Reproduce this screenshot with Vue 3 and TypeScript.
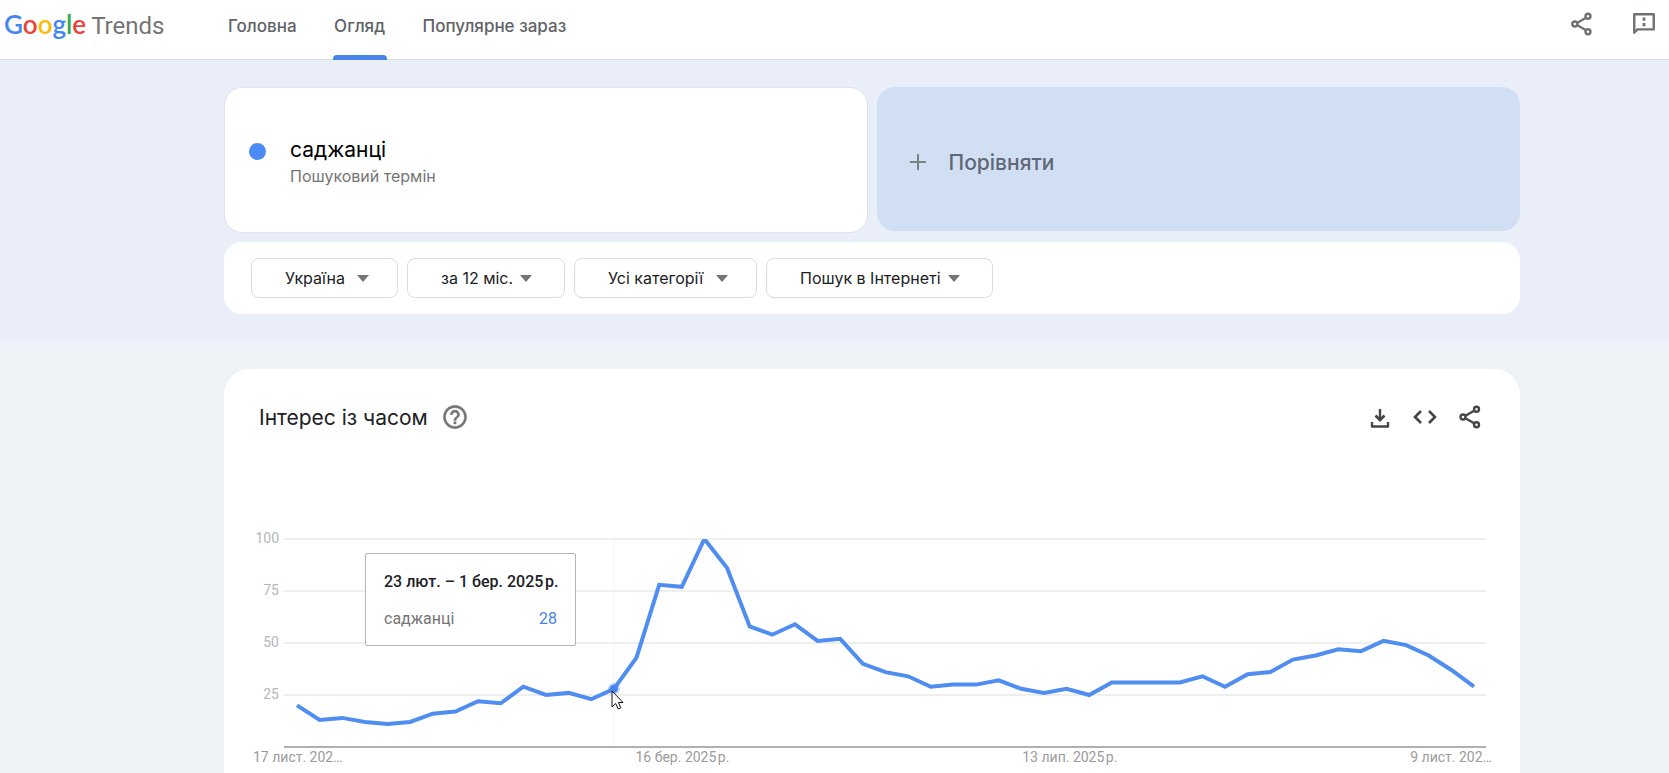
<script setup lang="ts">
interface Filter { id: string; label: string; options: string[]; size: string }

const nav = [
  { label: 'Головна', active: false },
  { label: 'Огляд', active: true },
  { label: 'Популярне зараз', active: false },
]

const logo = [
  { ch: 'G', tone: 'blue' },
  { ch: 'o', tone: 'red' },
  { ch: 'o', tone: 'yellow' },
  { ch: 'g', tone: 'blue' },
  { ch: 'l', tone: 'green' },
  { ch: 'e', tone: 'red' },
]

const filters: Filter[] = [
  { id: 'geo', label: 'Країна', options: ['Україна'], size: 'w-geo' },
  { id: 'time', label: 'Період', options: ['за 12 міс.'], size: 'w-time' },
  { id: 'cat', label: 'Категорія', options: ['Усі категорії'], size: 'w-cat' },
  { id: 'prop', label: 'Тип пошуку', options: ['Пошук в Інтернеті'], size: 'w-prop' },
]

const interest = [
  20, 13, 14, 12, 11, 12, 16, 17, 22, 21, 29, 25, 26, 23, 28, 43, 78, 77, 100, 86, 58, 54, 59, 51, 52, 40, 36,
  34, 29, 30, 30, 32, 28, 26, 28, 25, 31, 31, 31, 31, 34, 29, 35, 36, 42, 44, 47, 46, 51, 49, 44, 37, 29,
]

const plot = { width: 1202, height: 208, left: 13, step: 1177 / 52 }
const hovered = 14
const px = (i: number) => plot.left + i * plot.step
const py = (v: number) => plot.height * (1 - v / 100)
const line = interest.map((v, i) => `${px(i).toFixed(1)},${py(v).toFixed(1)}`).join(' ')
const ticks = [100, 75, 50, 25]
const dates = ['17 лист. 202…', '16 бер. 2025\u200Aр.', '13 лип. 2025\u200Aр.', '9 лист. 202…']
</script>

<template>
  <div class="page">
    <header class="topbar">
      <a class="logo" href="#" aria-label="Google Trends">
        <span class="google"><span v-for="(l, i) in logo" :key="i" :class="l.tone">{{ l.ch }}</span></span>
        <span class="trends">Trends</span>
      </a>
      <nav class="nav">
        <a v-for="n in nav" :key="n.label" href="#" :class="{ active: n.active }">{{ n.label }}</a>
      </nav>
      <div class="top-actions">
        <button type="button" aria-label="Поділитися">
          <svg viewBox="0 0 24 24" width="24" height="24" fill="none" stroke="currentColor" stroke-width="2.4">
            <path d="M7 11 16 5.800M7 13 16 18.200" />
            <circle cx="18" cy="4.300" r="2.500" /><circle cx="4.800" cy="12" r="2.500" /><circle cx="18" cy="19.700" r="2.500" />
          </svg>
        </button>
        <button type="button" aria-label="Надіслати відгук">
          <svg viewBox="0 0 24 24" width="26" height="26" fill="none" stroke="currentColor" stroke-width="2.200">
            <path d="M3 20V3h18v14H6z" stroke-linejoin="round" />
            <path d="M12 6v3M12 11v3" stroke-width="2.600" />
          </svg>
        </button>
      </div>
    </header>

    <section class="query">
      <div class="terms">
        <div class="term">
          <span class="dot"></span>
          <div>
            <div class="term-name">саджанці</div>
            <div class="term-kind">Пошуковий термін</div>
          </div>
        </div>
        <button type="button" class="compare">
          <svg viewBox="0 0 18 18" width="18" height="18" stroke="#74877f" stroke-width="2"><path d="M9 1v16M1 9h16" /></svg>
          <span>Порівняти</span>
        </button>
      </div>
      <div class="filters">
        <div v-for="f in filters" :key="f.id" class="filter" :class="f.size">
          <select :id="f.id" :aria-label="f.label">
            <option v-for="o in f.options" :key="o">{{ o }}</option>
          </select>
          <svg class="caret" viewBox="0 0 12 7" width="12" height="7"><path d="M0 0h12L6 7z" /></svg>
        </div>
      </div>
    </section>

    <main class="results">
      <section class="card">
        <div class="card-head">
          <h2>Інтерес із часом</h2>
          <button type="button" class="help" aria-label="Довідка">
            <svg viewBox="0 0 24 24" width="28" height="28" fill="currentColor" stroke="currentColor" stroke-width="0.300">
              <path d="M11 18h2v-2h-2v2zm1-16C6.480 2 2 6.480 2 12s4.480 10 10 10 10-4.480 10-10S17.520 2 12 2zm0 18c-4.410 0-8-3.590-8-8s3.590-8 8-8 8 3.590 8 8-3.590 8-8 8zm0-14c-2.210 0-4 1.790-4 4h2c0-1.100.9-2 2-2s2 .9 2 2c0 2-3 1.750-3 5h2c0-2.250 3-2.500 3-5 0-2.210-1.790-4-4-4z" />
            </svg>
          </button>
          <div class="card-actions">
            <button type="button" aria-label="Завантажити">
              <svg viewBox="0 0 24 24" width="24" height="24" fill="none" stroke="currentColor" stroke-width="2.400">
                <path d="M12 4v10M4 17v4.500h16V17" stroke-linejoin="round" />
                <path d="M7.500 10.500 12 15l4.500-4.500" stroke-width="2.800" />
              </svg>
            </button>
            <button type="button" aria-label="Вставити">
              <svg viewBox="0 0 24 24" width="24" height="24" fill="none" stroke="currentColor" stroke-width="2.600">
                <path d="M8 6l-6 6 6 6M16 6l6 6-6 6" />
              </svg>
            </button>
            <button type="button" aria-label="Поділитися">
              <svg viewBox="0 0 24 24" width="24" height="24" fill="none" stroke="currentColor" stroke-width="2.400">
                <path d="M7 11 16.500 5.500M7 13 16.500 18.500" />
                <circle cx="18.500" cy="4.300" r="2.500" /><circle cx="5" cy="12" r="2.500" /><circle cx="18.500" cy="19.700" r="2.500" />
              </svg>
            </button>
          </div>
        </div>

        <div class="chart">
          <div class="scale"><span v-for="t in ticks" :key="t">{{ t }}</span></div>
          <div class="plot">
            <svg class="lines" :viewBox="`0 0 ${plot.width} ${plot.height}`" preserveAspectRatio="none">
              <line v-for="t in ticks" :key="t" class="grid" x1="0" :x2="plot.width" :y1="py(t)" :y2="py(t)" />
              <line class="marker" :x1="px(hovered)" :x2="px(hovered)" y1="0" :y2="plot.height" />
              <line class="base" x1="0" :x2="plot.width" :y1="plot.height" :y2="plot.height" />
              <svg x="0" y="0" :width="plot.width" :height="plot.height"><polyline class="series" :points="line" /></svg>
              <circle class="halo" :cx="px(hovered)" :cy="py(interest[hovered])" r="6" />
              <circle class="point" :cx="px(hovered)" :cy="py(interest[hovered])" r="4" />
            </svg>
            <div class="tooltip">
              <div class="tip-date">23 лют. – 1 бер. 2025&#8202;р.</div>
              <div class="tip-row"><span>саджанці</span><span class="tip-value">28</span></div>
            </div>
            <svg class="cursor" viewBox="0 0 13 20" width="13" height="20">
              <path d="M1 1v16l3.700-3.500 2.500 5.500 2.600-1.200-2.400-5.300H12z" fill="#fff" stroke="#111" stroke-width="1" />
            </svg>
          </div>
        </div>
        <div class="dates"><span v-for="d in dates" :key="d">{{ d }}</span></div>
      </section>
    </main>
  </div>
</template>

<style>
body { margin: 0; background: #eff3f8; overflow: hidden; }
</style>

<style scoped>
.page { min-height: 100vh; font-family: Inter, "Noto Sans", sans-serif; color: #202124; }
button { border: 0; padding: 0; background: none; font: inherit; color: inherit; display: flex; align-items: center; cursor: pointer; }
svg { display: block; }
a { text-decoration: none; }

.topbar { display: flex; height: 59px; background: #fff; border-bottom: 1px solid #dadce0; }
.logo { width: 223px; padding-left: 4px; box-sizing: border-box; display: flex; align-items: baseline; gap: 5px; line-height: 48px; }
.google { font-family: Lato, sans-serif; font-size: 26px; font-weight: 600; }
.trends { font-family: Roboto, sans-serif; font-size: 24px; color: #757575; }
.blue { color: #4285f4; }
.red { color: #ea4335; }
.yellow { color: #fbbc05; }
.green { color: #34a853; }
.nav { display: flex; gap: 36px; padding-left: 5px; font-size: 17px; font-weight: 500; line-height: 52px; }
.nav a { color: #5f6368; height: 60px; box-sizing: border-box; white-space: nowrap; }
.nav a.active { position: relative; min-width: 54px; text-align: center; }
.nav a.active::after { content: ""; position: absolute; left: 0; right: 0; bottom: 0; height: 5px; border-radius: 4px 4px 0 0; background: #4684ee; }
.top-actions { margin-left: auto; display: flex; gap: 37px; padding: 0 12px 12px 0; color: #6f7274; }

.query { background: #e9eef9; padding: 27px 149px 28px 224px; }
.terms { display: grid; grid-template-columns: 1fr 1fr; gap: 9px; align-items: start; }
.term { height: 144px; display: flex; align-items: center; background: #fff; border: 1px solid #dfe3ea; border-radius: 18px; padding-left: 24px; }
.term > div { padding-top: 4px; }
.dot { width: 17px; height: 17px; margin: 0 24px 18px 0; border-radius: 50%; background: #4c8bf5; }
.term-name { font-size: 21px; line-height: 28px; color: #000; }
.term-kind { font-size: 16px; line-height: 24px; color: #757575; }
.compare { height: 144px; box-sizing: border-box; padding: 6px 0 0 32px; gap: 22px; background: #d1dff4; border-radius: 18px; font-size: 21px; font-weight: 500; color: #5f6874; }
.filters { display: flex; gap: 9px; margin-top: 9px; background: #fff; border-radius: 18px; padding: 16px 27px; }
.filter { display: flex; position: relative; height: 40px; }
.filter select { appearance: none; width: 100%; border: 1px solid #dadce0; border-radius: 8px; background: #fff; padding: 0 0 0 33px; font: inherit; font-size: 16px; color: #202124; }
.caret { position: absolute; right: 29px; top: 17px; fill: #757575; pointer-events: none; }
.w-geo { width: 147px; }
.w-time { width: 158px; }
.w-cat { width: 183px; }
.w-prop { width: 227px; }
.w-time .caret, .w-prop .caret { right: 33px; }

.results { padding: 27px 149px 0 224px; }
.card { background: #fff; border-radius: 26px 26px 0 0; padding-bottom: 40px; }
.card-head { display: flex; align-items: center; padding: 30px 38px 0 35px; height: 36px; }
h2 { margin: 0; font-size: 21px; font-weight: 400; }
.help { margin-left: 13px; color: #757575; }
.card-actions { margin-left: auto; display: flex; gap: 21px; color: #444746; }

.chart { display: grid; grid-template-columns: 60px 1fr; margin-top: 104px; padding-right: 34px; font-family: Roboto, sans-serif; }
.scale { display: flex; flex-direction: column; align-items: flex-end; height: 208px; margin-top: -9px; padding-right: 5px; font-size: 14px; line-height: 16px; color: #b4b7ba; }
.scale span { height: 52px; }
.plot { position: relative; height: 208px; }
.lines { width: 100%; height: 208px; overflow: visible; }
.grid { stroke: #dedede; stroke-width: 1; }
.marker { stroke: #f1f1f1; stroke-width: 1; }
.base { stroke: #b0b0b0; stroke-width: 2; }
.series { fill: none; stroke: #4f8df0; stroke-width: 4; }
.halo { fill: #4f8df0; opacity: 0.35; }
.point { fill: #4684ee; }
.tooltip { position: absolute; left: 81px; top: 14px; width: 211px; height: 93px; box-sizing: border-box; padding: 16px 18px; background: #fff; border: 1px solid #b3b3b3; border-radius: 2px; font-size: 16px; line-height: 24px; white-space: nowrap; }
.tip-date { font-weight: 500; color: #202124; }
.tip-row { display: flex; justify-content: space-between; margin-top: 13px; color: #757575; }
.tip-value { color: #4684ee; }
.cursor { position: absolute; left: 327px; top: 151px; }
.dates { display: flex; justify-content: space-between; padding: 1px 28px 0 29px; font: 14px/18px Roboto, sans-serif; color: #9b9b9b; }
</style>
